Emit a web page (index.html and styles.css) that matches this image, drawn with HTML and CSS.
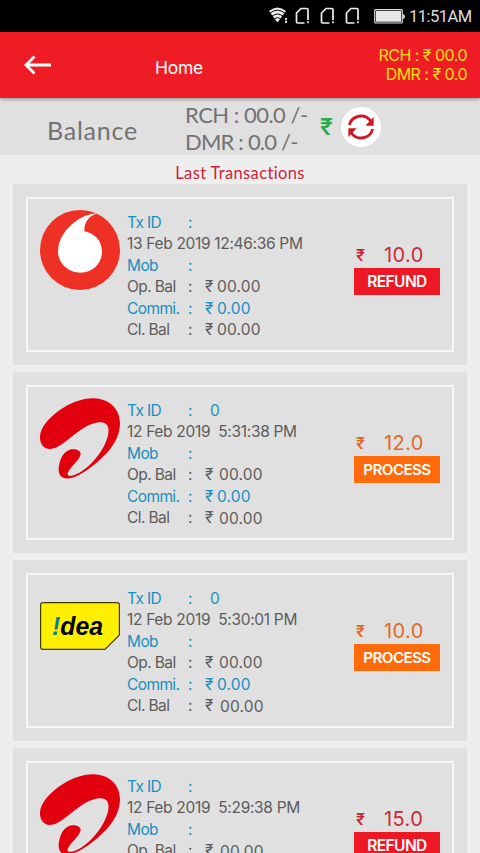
FILE: index.html
```html
<!DOCTYPE html>
<html lang="en">
<head>
<meta charset="utf-8">
<title>Home</title>
<link rel="stylesheet" href="styles.css">
</head>
<body>
<svg class="defs" width="0" height="0" aria-hidden="true">
  <symbol id="sim" viewBox="0 0 15 18"><path d="M13 10.500V2.800Q13 1.500 11.700 1.500H6L1.500 6V14.700Q1.500 16 2.800 16H9.500" fill="none" stroke="#eee" stroke-width="1.700"/><path d="M13 9.500V13M13 14.300V16.200" stroke="#eee" stroke-width="1.700"/></symbol>
  <symbol id="vodafone" viewBox="0 0 240 240"><circle cx="120" cy="120" r="120" fill="#ee3124"/><path d="M172 10C160 10 133 16 111 31C76 55 54 90 54 124C54 160 84 188 121 188C159 188 186 159 186 125C186 92 164 70 133 64C132 39 144 19 172 10Z" fill="#fff"/></symbol>
  <symbol id="airtel" viewBox="0 0 240 242"><path d="M0 115C1 87 29 55 70 29C103 8 140-2 169 1C211 5 240 34 240 77C239 120 212 158 175 189C144 215 110 240 82 241C63 241 55 229 56 212C58 187 68 160 92 154C110 150 122 158 122 168C121 183 86 211 83 225C81 233 89 235 101 231C130 222 164 189 183 159C202 129 211 98 202 82C195 70 178 71 160 76C121 87 86 128 53 146C24 161-1 148 0 115Z" fill="#e2000f"/></symbol>
</svg>

<header class="status">
  <svg class="wifi" width="20" height="18" viewBox="0 0 20 18"><path d="M1 4Q9.500-3 18 4L9.500 15.500Z" fill="#eee"/><path d="M1.800 6.300Q9.500 0 17.200 6.300M3.900 9.400Q9.500 4.500 15.100 9.400M6.200 12.300Q9.500 9 12.800 12.300" fill="none" stroke="#000" stroke-width="1"/><path d="M18 11V13.200M18 14V16" stroke="#ddd" stroke-width="2"/></svg>
  <svg class="sim" width="15" height="18"><use href="#sim"/></svg>
  <svg class="sim" width="15" height="18"><use href="#sim"/></svg>
  <svg class="sim" width="15" height="18"><use href="#sim"/></svg>
  <svg class="battery" width="32" height="15" viewBox="0 0 32 15"><rect x=".7" y=".7" width="27.600" height="13.300" rx="1" fill="#111" stroke="#ddd" stroke-width="1.200"/><rect x="2" y="2" width="25" height="10.700" fill="#e8e8e8"/><path d="M29 5Q31 5 31 7.500T29 10Z" fill="#ccc"/></svg>
  <span class="time">11:51AM</span>
</header>

<nav class="bar">
  <svg class="back" width="28" height="20" viewBox="0 0 28 20"><path d="M10.500 1.500L2 10L10.500 18.500M2 10H27" fill="none" stroke="#fff" stroke-width="2.800"/></svg>
  <h1 class="title">Home</h1>
  <div class="wallet"><div>RCH : ₹ 00.0</div><div>DMR : ₹ 0.0</div></div>
</nav>

<section class="balance">
  <span class="balance-label">Balance</span>
  <div class="balance-values"><div>RCH : 00.0 /-</div><div class="dmr">DMR : 0.0 /-</div></div>
  <span class="rupee">₹</span>
  <svg class="refresh" width="40" height="40" viewBox="0 0 120 120"><circle cx="60" cy="60" r="60" fill="#fff"/><path d="M25 54A36 36 0 0 1 89 42M95 66A36 36 0 0 1 31 78" fill="none" stroke="#d31622" stroke-width="8.500"/><path d="M98 30V56H73ZM22 90V64H47Z" fill="#d31622"/></svg>
</section>

<h2 class="heading">Last Transactions</h2>

<main class="list">
  <article class="card"><div class="frame">
    <svg class="logo" width="80" height="80"><use href="#vodafone"/></svg>
    <div class="details">
      <div class="row blue"><span>Tx ID</span><span>:</span></div>
      <div class="date">13 Feb 2019 12:46:36 PM</div>
      <div class="row blue"><span>Mob</span><span>:</span></div>
      <div class="row"><span>Op. Bal</span><span>:</span><span>₹</span><span class="value">00.00</span></div>
      <div class="row blue"><span>Commi.</span><span>:</span><span>₹</span><span class="value">0.00</span></div>
      <div class="row"><span>Cl. Bal</span><span>:</span><span>₹</span><span class="value">00.00</span></div>
    </div>
    <div class="result refund"><div class="amount"><span class="sign">₹</span><span>10.0</span></div><div class="badge">REFUND</div></div>
  </div></article>

  <article class="card"><div class="frame">
    <svg class="logo" width="80" height="81"><use href="#airtel"/></svg>
    <div class="details">
      <div class="row blue"><span>Tx ID</span><span>:</span><span class="txid">0</span></div>
      <div class="date">12 Feb 2019&nbsp; 5:31:38 PM</div>
      <div class="row blue"><span>Mob</span><span>:</span></div>
      <div class="row wide"><span>Op. Bal</span><span>:</span><span>₹</span><span class="value">00.00</span></div>
      <div class="row blue"><span>Commi.</span><span>:</span><span>₹</span><span class="value">0.00</span></div>
      <div class="row wide low"><span>Cl. Bal</span><span>:</span><span>₹</span><span class="value">00.00</span></div>
    </div>
    <div class="result process"><div class="amount"><span class="sign">₹</span><span>12.0</span></div><div class="badge">PROCESS</div></div>
  </div></article>

  <article class="card"><div class="frame">
    <svg class="logo idea" width="80" height="48" viewBox="0 0 80 48"><path d="M3 .6H77Q79.400.6 79.400 3V33L65 47.400H3Q.6 47.400.6 45V3Q.6.6 3 .6Z" fill="#ffef00" stroke="#403b10" stroke-width="1.200"/><text class="idea-text" y="32.500" textLength="51" lengthAdjust="spacingAndGlyphs" x="12"><tspan fill="#087e91">!</tspan>dea</text></svg>
    <div class="details">
      <div class="row blue"><span>Tx ID</span><span>:</span><span class="txid">0</span></div>
      <div class="date">12 Feb 2019&nbsp; 5:30:01 PM</div>
      <div class="row blue"><span>Mob</span><span>:</span></div>
      <div class="row wide"><span>Op. Bal</span><span>:</span><span>₹</span><span class="value">00.00</span></div>
      <div class="row blue"><span>Commi.</span><span>:</span><span>₹</span><span class="value">0.00</span></div>
      <div class="row wider low"><span>Cl. Bal</span><span>:</span><span>₹</span><span class="value">00.00</span></div>
    </div>
    <div class="result process"><div class="amount"><span class="sign">₹</span><span>10.0</span></div><div class="badge">PROCESS</div></div>
  </div></article>

  <article class="card"><div class="frame">
    <svg class="logo" width="80" height="81"><use href="#airtel"/></svg>
    <div class="details">
      <div class="row blue"><span>Tx ID</span><span>:</span></div>
      <div class="date">12 Feb 2019&nbsp; 5:29:38 PM</div>
      <div class="row blue"><span>Mob</span><span>:</span></div>
      <div class="row wider low"><span>Op. Bal</span><span>:</span><span>₹</span><span class="value">00.00</span></div>
    </div>
    <div class="result refund"><div class="amount"><span class="sign">₹</span><span>15.0</span></div><div class="badge">REFUND</div></div>
  </div></article>
</main>
</body>
</html>
```
FILE: styles.css
```css
* { box-sizing: border-box; }
html, body { height: 853px; overflow: hidden; }
body { margin: 0; width: 480px; background: #eee; color: #5c5c5c; font-family: Inter, "Liberation Sans", sans-serif; }
svg { display: block; flex: none; }
.defs { position: absolute; }

.status { display: flex; height: 32px; padding: 7px 0 0 268px; background: #000; color: #ddd; }
.wifi { margin-right: 7px; }
.sim { margin-right: 10px; }
.battery { margin: 2px 3px 0 4px; }
.time { font: 16.5px/20px Roboto, sans-serif; white-space: nowrap; letter-spacing: -.5px; }

.bar { display: flex; height: 66px; padding: 0 13px 0 24px; background: #ee1d25; color: #fff; position: relative; box-shadow: 0 1px 4px rgba(0,0,0,.4); }
.back { margin-top: 23px; }
.title { margin: 26px 0 0 103px; font-size: 17.5px; line-height: 20px; font-weight: 400; letter-spacing: -.3px; }
.wallet { margin: 14px 0 0 auto; text-align: right; color: #fbe014; font-size: 16px; line-height: 19px; letter-spacing: -.52px; }

.balance { display: flex; height: 57px; background: #e0e0e0; color: #727272; font-family: Lato, sans-serif; }
.balance-label { width: 138px; margin: 17px 0 0 47px; font-size: 25px; line-height: 30px; letter-spacing: .75px; }
.balance-values { width: 135px; margin-top: 3px; font-size: 22px; line-height: 27px; letter-spacing: -.5px; white-space: nowrap; }
.dmr { letter-spacing: -.8px; }
.rupee { width: 21px; margin-top: 15px; font: 600 23px/28px Inter, sans-serif; color: #2dab4c; }
.refresh { margin-top: 9px; }
.heading { margin: 0; height: 29px; padding-top: 8px; font: 400 16.5px/20px Lato, sans-serif; color: #cc2438; text-align: center; letter-spacing: .35px; }

.list { display: flex; flex-direction: column; gap: 7px; padding: 0 13px; }
.card { flex: none; height: 181px; padding: 13px; background: #e0e0e0; }
.frame { display: flex; height: 155px; border: 2px solid #f6f6f6; padding-left: 12px; }
.logo { margin: 11px 7px 0 0; }
.idea { margin-top: 27px; }
.idea-text { font: italic bold 25px "Liberation Sans", sans-serif; }
.details { width: 227px; padding-top: 13px; font-size: 15.5px; letter-spacing: -.3px; }
.row { display: grid; grid-template-columns: 61px 17px 12px 1fr; height: 21.4px; line-height: 21.4px; white-space: nowrap; }
.row span:first-child { letter-spacing: -.6px; }
.date { height: 21.4px; line-height: 21.4px; white-space: nowrap; letter-spacing: -.32px; }
.blue { color: #188fc0; }
.wide { grid-template-columns: 61px 17px 14px 1fr; }
.wider { grid-template-columns: 61px 17px 15px 1fr; }
.value { letter-spacing: .2px; }
.low .value { padding-top: 1px; }
.txid { padding-left: 5px; }
.result { width: 86px; padding-top: 44px; }
.amount { display: flex; height: 25px; font-size: 20px; line-height: 24px; letter-spacing: .4px; }
.sign { width: 30px; padding-left: 2px; font-size: 16px; font-weight: 600; }
.refund .amount { color: #cb2837; }
.process .amount { color: #e06a26; }
.badge { height: 27px; line-height: 28px; text-align: center; font-size: 15.5px; font-weight: 600; letter-spacing: -.6px; color: #fff; background: #ee1825; }
.process .badge { font-size: 15.2px; background: #ff6a0a; }
```
